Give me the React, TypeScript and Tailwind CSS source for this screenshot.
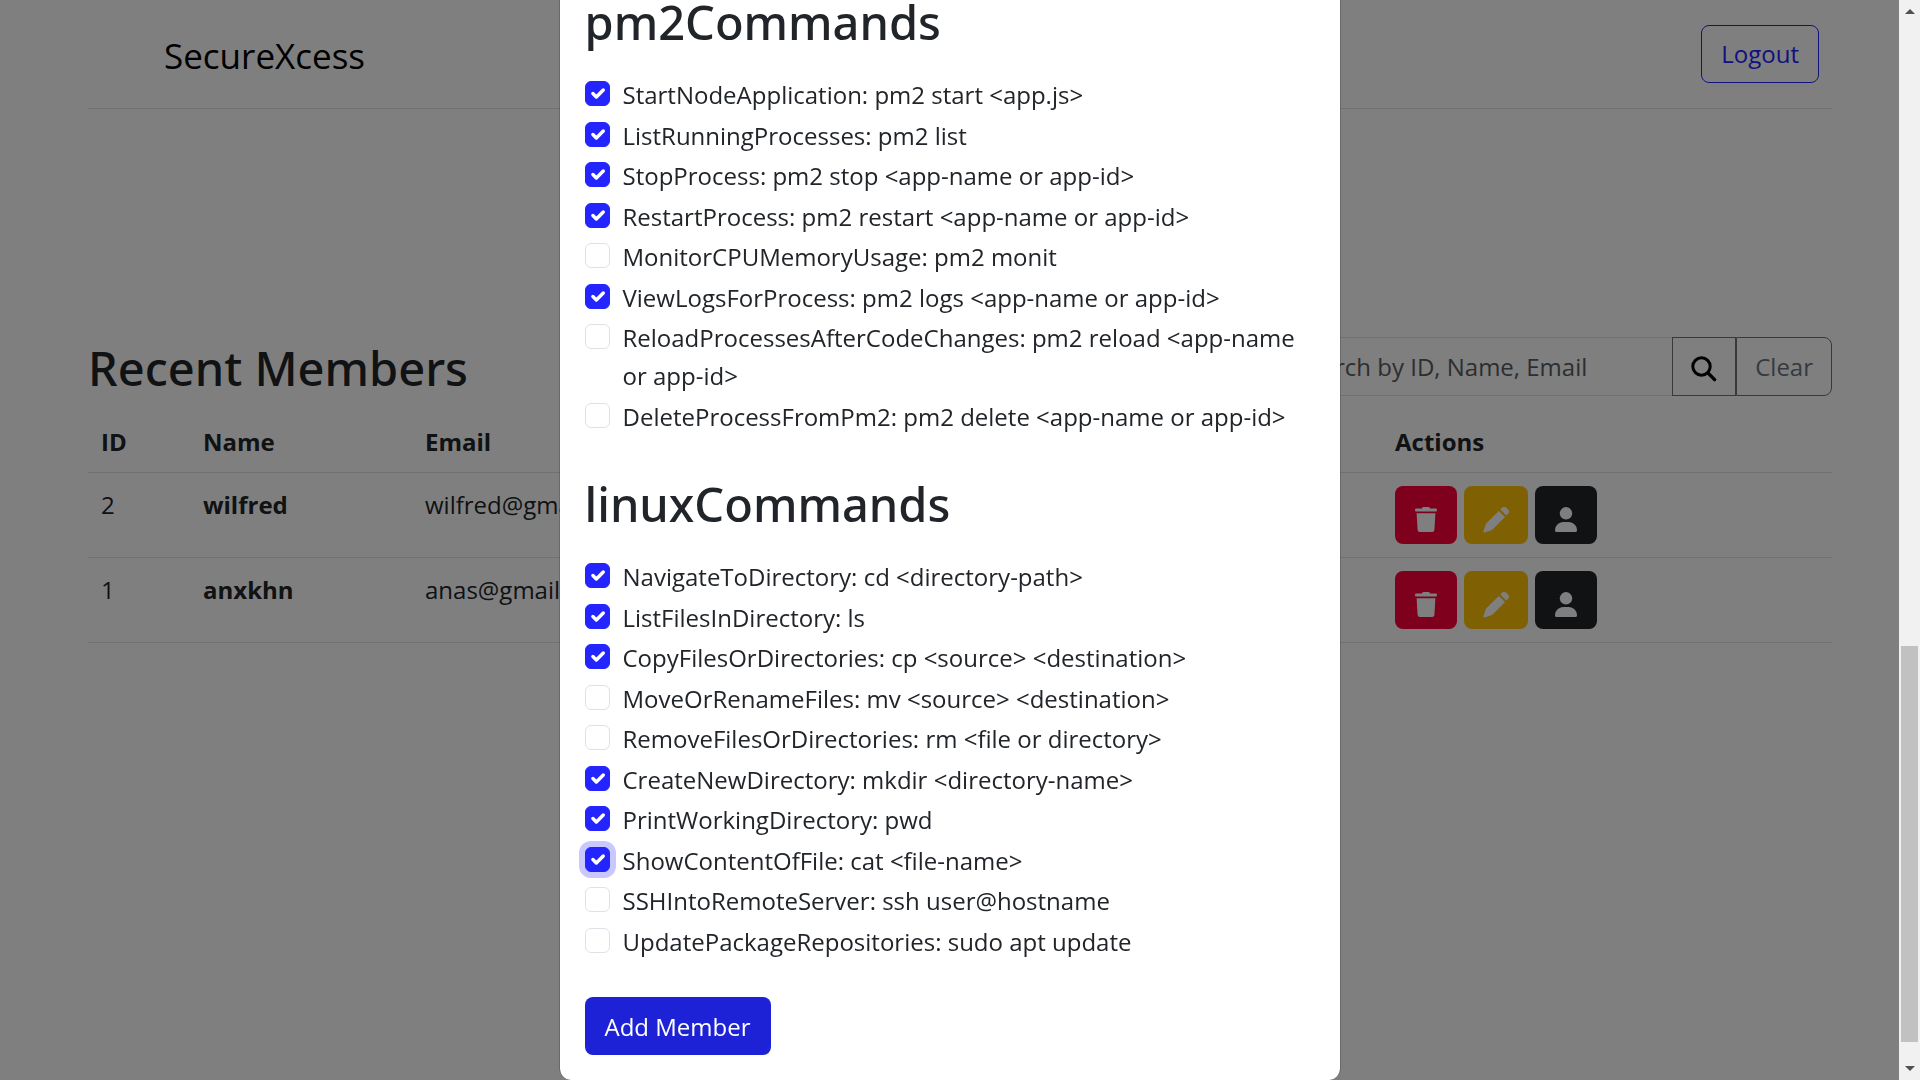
type Command = { name: string; usage: string; checked?: boolean; focused?: boolean };

const groups: { title: string; listClass: string; commands: Command[] }[] = [
  {
    title: "pm2Commands",
    listClass: "min-h-[360px]",
    commands: [
      { name: "StartNodeApplication", usage: "pm2 start <app.js>", checked: true },
      { name: "ListRunningProcesses", usage: "pm2 list", checked: true },
      { name: "StopProcess", usage: "pm2 stop <app-name or app-id>", checked: true },
      { name: "RestartProcess", usage: "pm2 restart <app-name or app-id>", checked: true },
      { name: "MonitorCPUMemoryUsage", usage: "pm2 monit" },
      { name: "ViewLogsForProcess", usage: "pm2 logs <app-name or app-id>", checked: true },
      { name: "ReloadProcessesAfterCodeChanges", usage: "pm2 reload <app-name or app-id>" },
      { name: "DeleteProcessFromPm2", usage: "pm2 delete <app-name or app-id>" },
    ],
  },
  {
    title: "linuxCommands",
    listClass: "min-h-[403px]",
    commands: [
      { name: "NavigateToDirectory", usage: "cd <directory-path>", checked: true },
      { name: "ListFilesInDirectory", usage: "ls", checked: true },
      { name: "CopyFilesOrDirectories", usage: "cp <source> <destination>", checked: true },
      { name: "MoveOrRenameFiles", usage: "mv <source> <destination>" },
      { name: "RemoveFilesOrDirectories", usage: "rm <file or directory>" },
      { name: "CreateNewDirectory", usage: "mkdir <directory-name>", checked: true },
      { name: "PrintWorkingDirectory", usage: "pwd", checked: true },
      { name: "ShowContentOfFile", usage: "cat <file-name>", checked: true, focused: true },
      { name: "SSHIntoRemoteServer", usage: "ssh user@hostname" },
      { name: "UpdatePackageRepositories", usage: "sudo apt update" },
    ],
  },
];

const members = [
  { id: 2, name: "wilfred", email: "wilfred@gmail.com" },
  { id: 1, name: "anxkhn", email: "anas@gmail.com" },
];

function SearchIcon() {
  return (
    <svg width="26" height="26" viewBox="0 0 26 26" fill="none" stroke="#000" aria-hidden="true">
      <circle cx="10.5" cy="10.5" r="8.7" strokeWidth="3" />
      <path d="M17 17l6.6 6.6" strokeWidth="3.4" strokeLinecap="round" />
    </svg>
  );
}

function TrashIcon() {
  return (
    <svg width="22" height="25" viewBox="0 0 22 25" fill="currentColor" aria-hidden="true">
      <path d="M7 1.4Q7.300 0 8.600 0h4.800Q14.700 0 15 1.400h5.600a1.400 1.400 0 0 1 1.400 1.400v.7a1.100 1.100 0 0 1-1.100 1.100H1.100A1.100 1.100 0 0 1 0 3.500v-.7A1.400 1.400 0 0 1 1.400 1.400z" />
      <path d="M1.600 6.200h18.800l-1 16.800a2.200 2.200 0 0 1-2.200 2H4.800a2.200 2.200 0 0 1-2.200-2z" />
    </svg>
  );
}

function PencilIcon() {
  return (
    <svg width="26" height="26" viewBox="0 0 26 26" fill="currentColor" aria-hidden="true">
      <path d="M17.300 2.400l1.400-1.400a3.400 3.400 0 0 1 4.800 0l1.300 1.300a3.400 3.400 0 0 1 0 4.800l-1.400 1.400z" />
      <path d="M15.800 3.900l6.200 6.200L9.800 22.300q-.6.600-1.500 1L1.700 25.500Q0 26 .4 24.300L2.600 17.600q.4-.9 1-1.500z" />
    </svg>
  );
}

function PersonIcon() {
  return (
    <svg width="22" height="25" viewBox="0 0 22 25" fill="currentColor" aria-hidden="true">
      <circle cx="11" cy="6.300" r="6.200" />
      <path d="M8.300 15h5.400C18.300 15 22 18.600 22 23.400q0 1.600-1.600 1.600H1.600Q0 25 0 23.400C0 18.600 3.700 15 8.300 15z" />
    </svg>
  );
}

function Header() {
  return (
    <header className="flex items-center justify-between border-b border-[#dee2e6] py-[25px] pr-[13px] pl-[76px]">
      <a href="#" className="pt-[3px] text-[35px] leading-[55px] text-black">
        SecureXcess
      </a>
      <button type="button" className="rounded-lg border border-[#2424ff] px-[19px] py-[9px] text-[#2424ff]">
        Logout
      </button>
    </header>
  );
}

function MemberTable() {
  return (
    <table className="mt-[13px] w-full table-fixed border-collapse text-left">
      <thead>
        <tr className="border-b border-[#dee2e6]">
          <th className="w-[102px] px-[13px] pt-[14px] pb-[11px]">ID</th>
          <th className="w-[222px] px-[13px] pt-[14px] pb-[11px]">Name</th>
          <th className="px-[13px] pt-[14px] pb-[11px]">Email</th>
          <th className="w-[450px] px-[13px] pt-[14px] pb-[11px]">Actions</th>
        </tr>
      </thead>
      <tbody>
        {members.map((m) => (
          <tr key={m.id} className="border-b border-[#dee2e6] align-top">
            <td className="px-[13px] pt-[13px]">{m.id}</td>
            <td className="px-[13px] pt-[13px] font-bold">{m.name}</td>
            <td className="px-[13px] pt-[13px]">{m.email}</td>
            <td className="px-[13px] py-[13px]">
              <div className="flex gap-[7px] text-white">
                <button type="button" aria-label="Delete" className="rounded-lg bg-[#ff0039] px-5 pt-[21px] pb-3">
                  <TrashIcon />
                </button>
                <button type="button" aria-label="Edit" className="rounded-lg bg-[#ffc107] px-[19px] pt-[21px] pb-[11px]">
                  <PencilIcon />
                </button>
                <button type="button" aria-label="Profile" className="rounded-lg bg-[#212529] px-5 pt-[21px] pb-3">
                  <PersonIcon />
                </button>
              </div>
            </td>
          </tr>
        ))}
      </tbody>
    </table>
  );
}

function CommandItem({ command }: { command: Command }) {
  const id = command.name;
  return (
    <li className="flex items-start gap-[13px]">
      <span className="mt-[5px] grid shrink-0 place-items-center">
        <input
          id={id}
          type="checkbox"
          defaultChecked={command.checked}
          className={
            "peer col-start-1 row-start-1 size-[25px] appearance-none rounded-md border border-[#dee2e6] bg-white checked:border-[#2424ff] checked:bg-[#2424ff]" +
            (command.focused ? " ring-6 ring-[#c8c8ff]" : "")
          }
        />
        <svg
          viewBox="0 0 20 20"
          fill="none"
          stroke="#fff"
          strokeWidth="3"
          strokeLinecap="round"
          strokeLinejoin="round"
          className="pointer-events-none invisible col-start-1 row-start-1 size-[23px] peer-checked:visible"
          aria-hidden="true"
        >
          <path d="M6 10l3 3 6-6" />
        </svg>
      </span>
      <label htmlFor={id}>
        {command.name}: {command.usage}
      </label>
    </li>
  );
}

function AddMemberDialog() {
  return (
    <div
      role="dialog"
      aria-label="Add Member"
      className="w-full max-w-[782px] rounded-b-xl border-x border-[#0000002d] bg-white bg-clip-padding px-[25px] pb-[25px]"
    >
      <form onSubmit={(e) => e.preventDefault()}>
        <div className="flex flex-col gap-[38px]">
          {groups.map((g) => (
            <section key={g.title}>
              <h1 className="mb-6 font-['Noto_Sans',sans-serif] text-[47px] leading-[60px] font-medium">{g.title}</h1>
              <ul className={"flex flex-col justify-between " + g.listClass}>
                {g.commands.map((c) => (
                  <CommandItem key={c.name} command={c} />
                ))}
              </ul>
            </section>
          ))}
        </div>
        <button type="submit" className="mt-9 rounded-lg bg-[#1e22d6] px-5 pt-[11px] pb-[9px] text-white">
          Add Member
        </button>
      </form>
    </div>
  );
}

function ScrollBar() {
  return (
    <div className="flex w-[21px] flex-col items-center justify-between bg-[#f1f1f1] py-[9px]" aria-hidden="true">
      <svg width="10" height="5" viewBox="0 0 10 5" fill="#505050">
        <path d="M5 0l5 5H0z" />
      </svg>
      <div className="flex flex-col items-center gap-6">
        <div className="h-[396px] w-[17px] bg-[#c1c1c1]" />
        <svg width="10" height="5" viewBox="0 0 10 5" fill="#505050">
          <path d="M0 0h10L5 5z" />
        </svg>
      </div>
    </div>
  );
}

export default function App() {
  return (
    <div className="min-h-screen bg-white font-['Open_Sans',sans-serif] text-[24px] leading-[38px] text-[#212529]">
      <div className="px-[88px]">
        <Header />
        <main className="pt-[228px]">
          <div className="flex items-center justify-between">
            <h1 className="pt-1 font-['Noto_Sans',sans-serif] text-[47px] leading-[55px] font-medium">
              Recent Members
            </h1>
            <form className="flex w-[558px]" role="search" onSubmit={(e) => e.preventDefault()}>
              <input
                type="search"
                aria-label="Search members"
                placeholder="Search by ID, Name, Email"
                className="min-w-0 flex-1 rounded-l-lg border border-r-0 border-[#dee2e6] bg-white px-5 placeholder:text-[#595c5f]"
              />
              <button type="submit" aria-label="Search" className="border border-[#6c757d] px-[18px] pt-1">
                <SearchIcon />
              </button>
              <button
                type="button"
                className="rounded-r-lg border border-[#6c757d] px-[18px] pt-[10px] pb-[9px] text-[#6c757d]"
              >
                Clear
              </button>
            </form>
          </div>
          <MemberTable />
        </main>
      </div>
      <div className="fixed inset-0 flex bg-black/50">
        <div className="flex flex-1 items-end justify-center overflow-hidden">
          <AddMemberDialog />
        </div>
        <ScrollBar />
      </div>
    </div>
  );
}
